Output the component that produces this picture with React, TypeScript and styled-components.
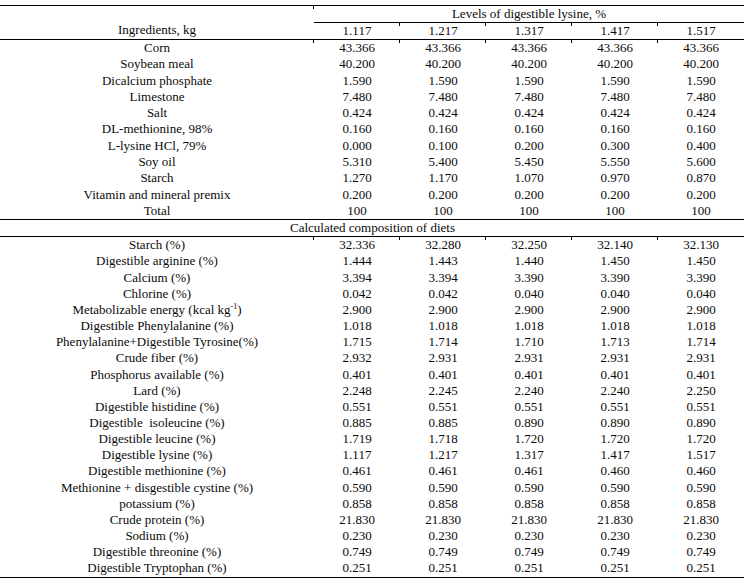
import styled, { createGlobalStyle } from 'styled-components';

const GlobalStyle = createGlobalStyle`
	body {
		margin: 0;
		background: #ffffff;
	}
`;

const Sup = styled.sup`
	font-size: 8px;
	line-height: 0;
	vertical-align: 5px;
`;

const lysineLevels = ['1.117', '1.217', '1.317', '1.417', '1.517'];

const ingredients: [string, string[]][] = [
	['Corn', ['43.366', '43.366', '43.366', '43.366', '43.366']],
	['Soybean meal', ['40.200', '40.200', '40.200', '40.200', '40.200']],
	['Dicalcium phosphate', ['1.590', '1.590', '1.590', '1.590', '1.590']],
	['Limestone', ['7.480', '7.480', '7.480', '7.480', '7.480']],
	['Salt', ['0.424', '0.424', '0.424', '0.424', '0.424']],
	['DL-methionine, 98%', ['0.160', '0.160', '0.160', '0.160', '0.160']],
	['L-lysine HCl, 79%', ['0.000', '0.100', '0.200', '0.300', '0.400']],
	['Soy oil', ['5.310', '5.400', '5.450', '5.550', '5.600']],
	['Starch', ['1.270', '1.170', '1.070', '0.970', '0.870']],
	['Vitamin and mineral premix', ['0.200', '0.200', '0.200', '0.200', '0.200']],
	['Total', ['100', '100', '100', '100', '100']],
];

const composition: [React.ReactNode, string[]][] = [
	['Starch (%)', ['32.336', '32.280', '32.250', '32.140', '32.130']],
	['Digestible arginine (%)', ['1.444', '1.443', '1.440', '1.450', '1.450']],
	['Calcium (%)', ['3.394', '3.394', '3.390', '3.390', '3.390']],
	['Chlorine (%)', ['0.042', '0.042', '0.040', '0.040', '0.040']],
	[
		<>
			Metabolizable energy (kcal kg<Sup>-1</Sup>)
		</>,
		['2.900', '2.900', '2.900', '2.900', '2.900'],
	],
	['Digestible Phenylalanine (%)', ['1.018', '1.018', '1.018', '1.018', '1.018']],
	['Phenylalanine+Digestible Tyrosine(%)', ['1.715', '1.714', '1.710', '1.713', '1.714']],
	['Crude fiber (%)', ['2.932', '2.931', '2.931', '2.931', '2.931']],
	['Phosphorus available (%)', ['0.401', '0.401', '0.401', '0.401', '0.401']],
	['Lard (%)', ['2.248', '2.245', '2.240', '2.240', '2.250']],
	['Digestible histidine (%)', ['0.551', '0.551', '0.551', '0.551', '0.551']],
	['Digestible  isoleucine (%)', ['0.885', '0.885', '0.890', '0.890', '0.890']],
	['Digestible leucine (%)', ['1.719', '1.718', '1.720', '1.720', '1.720']],
	['Digestible lysine (%)', ['1.117', '1.217', '1.317', '1.417', '1.517']],
	['Digestible methionine (%)', ['0.461', '0.461', '0.461', '0.460', '0.460']],
	['Methionine + disgestible cystine (%)', ['0.590', '0.590', '0.590', '0.590', '0.590']],
	['potassium (%)', ['0.858', '0.858', '0.858', '0.858', '0.858']],
	['Crude protein (%)', ['21.830', '21.830', '21.830', '21.830', '21.830']],
	['Sodium (%)', ['0.230', '0.230', '0.230', '0.230', '0.230']],
	['Digestible threonine (%)', ['0.749', '0.749', '0.749', '0.749', '0.749']],
	['Digestible Tryptophan (%)', ['0.251', '0.251', '0.251', '0.251', '0.251']],
];

const App = (): JSX.Element => {
	return (
		<>
			<GlobalStyle />
			<StyledPage>
				<StyledTable>
					<colgroup>
						<col style={{ width: 314 }} />
						{lysineLevels.map((l) => (
							<col key={l} style={{ width: 86 }} />
						))}
					</colgroup>
					<thead>
						<StyledHeadRow>
							<StyledHeadCell rowSpan={2} $bottomRule $bottom>
								Ingredients, kg
							</StyledHeadCell>
							<StyledHeadCell colSpan={5} $bottomRule $tick>
								Levels of digestible lysine, %
							</StyledHeadCell>
						</StyledHeadRow>
						<StyledHeadRow>
							{lysineLevels.map((l, i) => (
								<StyledHeadCell key={l} $bottomRule $tick={i > 0}>
									{l}
								</StyledHeadCell>
							))}
						</StyledHeadRow>
					</thead>
					<tbody>
						{ingredients.map(([name, values], r) => (
							<StyledRow key={name} $last={r === ingredients.length - 1}>
								<StyledCell $rowHeight={16.3}>{name}</StyledCell>
								{values.map((v, i) => (
									<StyledCell key={i} $tick={r === 0} $rowHeight={16.3}>
										{v}
									</StyledCell>
								))}
							</StyledRow>
						))}
						<StyledHeadRow>
							<StyledSectionCell colSpan={6}>
								<StyledSectionTitle>
									Calculated composition of diets
								</StyledSectionTitle>
							</StyledSectionCell>
						</StyledHeadRow>
						{composition.map(([name, values], r) => (
							<StyledRow key={r} $last={r === composition.length - 1}>
								<StyledCell $rowHeight={16.15}>{name}</StyledCell>
								{values.map((v, i) => (
									<StyledCell key={i} $tick={r === 0} $rowHeight={16.15}>
										{v}
									</StyledCell>
								))}
							</StyledRow>
						))}
					</tbody>
				</StyledTable>
			</StyledPage>
		</>
	);
};

export default App;

const StyledPage = styled.div`
	padding: 5px 0 0 0;
	width: 749px;
	font-family: 'Liberation Serif', 'Times New Roman', serif;
	font-size: 13px;
	color: #0a0a0a;
`;

const StyledTable = styled.table`
	width: 744px;
	border-collapse: collapse;
	table-layout: fixed;
	border-top: 1px solid #000000;
`;

const StyledHeadRow = styled.tr`
	height: 17px;
`;

type CellProps = {
	$bottomRule?: boolean;
	$tick?: boolean;
	$bottom?: boolean;
	$rowHeight?: number;
};

const StyledHeadCell = styled.th<CellProps>(
	({ $bottomRule, $tick, $bottom }) => `
	position: relative;
	padding: 0 0 ${$bottom ? '1px' : '0'} 0;
	font-weight: normal;
	text-align: center;
	vertical-align: ${$bottom ? 'bottom' : 'middle'};
	line-height: 16px;
	border-bottom: ${$bottomRule ? '1px solid #000000' : 'none'};
	&::before {
		content: '';
		display: ${$tick ? 'block' : 'none'};
		position: absolute;
		left: -1px;
		top: 0;
		width: 1px;
		height: 3px;
		background: #000000;
	}
	`
);

const StyledSectionCell = styled.td`
	padding: 0;
	border-bottom: 1px solid #000000;
	line-height: 16px;
`;

const StyledSectionTitle = styled.div`
	margin-left: 290px;
`;

type RowProps = {
	$last: boolean;
};

const StyledRow = styled.tr<RowProps>(
	({ $last }) => `
	border-bottom: ${$last ? '1px solid #000000' : 'none'};
	`
);

const StyledCell = styled.td<CellProps>(
	({ $tick, $rowHeight = 16.2 }) => `
	position: relative;
	height: ${$rowHeight}px;
	padding: 0;
	text-align: center;
	white-space: pre;
	line-height: ${$rowHeight}px;
	&::before {
		content: '';
		display: ${$tick ? 'block' : 'none'};
		position: absolute;
		left: -1px;
		top: 0;
		width: 1px;
		height: 3px;
		background: #000000;
	}
	`
);
